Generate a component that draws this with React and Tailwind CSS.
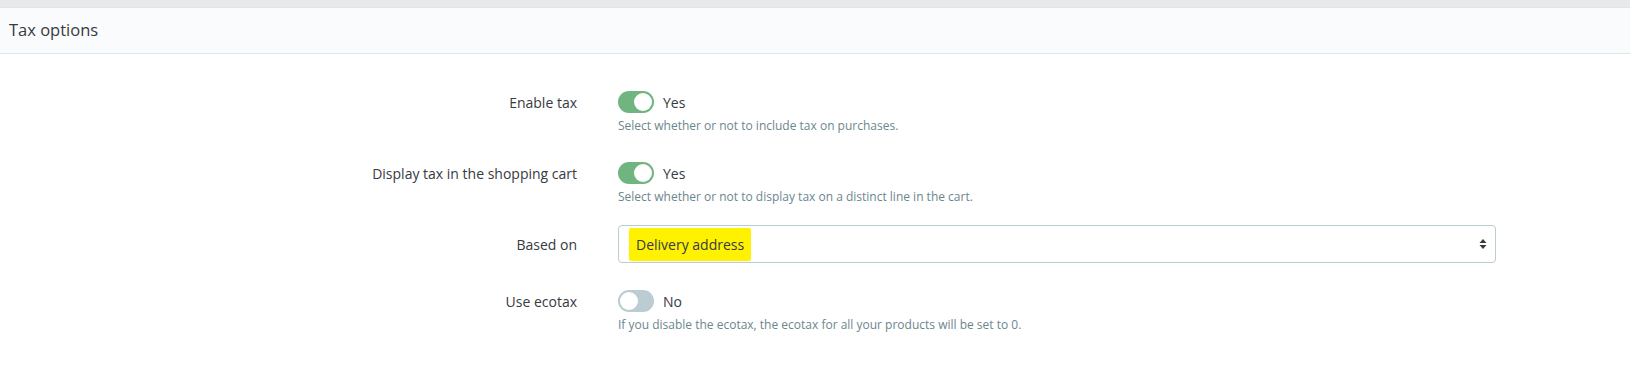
import React from 'react';

const Toggle = ({ on, label }) => (
  <div className="flex items-center h-[22px]">
    <span
      className={`relative inline-flex items-center w-[36px] h-[22px] rounded-full ${
        on ? 'bg-[#70b580] justify-end' : 'bg-[#bbcdd2] justify-start'
      }`}
    >
      <span className="block w-[18px] h-[18px] mx-[2px] rounded-full bg-white" />
    </span>
    <span className="ml-[9px] text-[14px] text-[#363a41]">{label}</span>
  </div>
);

const Row = ({ label, lineHeight = 'h-[22px]', children, className = '' }) => (
  <div className={`flex items-start ${className}`}>
    <div className={`w-[577px] flex items-center justify-end text-[14px] text-[#363a41] ${lineHeight}`}>
      {label}
    </div>
    <div className="ml-[41px] w-[878px]">{children}</div>
  </div>
);

const Help = ({ children }) => (
  <p className="mt-[5px] text-[12px] leading-[16px] text-[#6c868e]">{children}</p>
);

export default function App() {
  return (
    <div className="w-[1630px] h-[366px] bg-white" style={{ fontFamily: '"Open Sans", "Liberation Sans", sans-serif' }}>
      <div className="h-[8px] bg-[#e8e9ea] border-b border-[#e1e3e4]" />

      {/* Header */}
      <div className="h-[46px] flex items-center pl-[9px] bg-[#fafbfc] border-b border-[#dbe6e9]">
        <h2 className="text-[16.5px] text-[#363a41]">Tax options</h2>
      </div>

      {/* Form */}
      <div className="pt-[37px]">
        <Row label="Enable tax">
          <Toggle on label="Yes" />
          <Help>Select whether or not to include tax on purchases.</Help>
        </Row>

        <Row label="Display tax in the shopping cart" className="mt-[28px]">
          <Toggle on label="Yes" />
          <Help>Select whether or not to display tax on a distinct line in the cart.</Help>
        </Row>

        <Row label="Based on" lineHeight="h-[38px]" className="mt-[20px]">
          <div className="h-[38px] flex items-center justify-between pl-[10px] pr-[8px] border border-[#bbcdd2] rounded-[4px]">
            <span className="h-[33px] flex items-center px-[7px] bg-[#fff200] rounded-[2px] text-[14px] text-[#363a41]">
              Delivery address
            </span>
            <svg width="8" height="12" viewBox="0 0 8 12" className="text-[#363a41]">
              <path d="M4 1 L7.5 5 H0.5 Z" fill="currentColor" />
              <path d="M4 11 L7.5 7 H0.5 Z" fill="currentColor" />
            </svg>
          </div>
        </Row>

        <Row label="Use ecotax" className="mt-[27px]">
          <Toggle label="No" />
          <Help>If you disable the ecotax, the ecotax for all your products will be set to 0.</Help>
        </Row>
      </div>
    </div>
  );
}
